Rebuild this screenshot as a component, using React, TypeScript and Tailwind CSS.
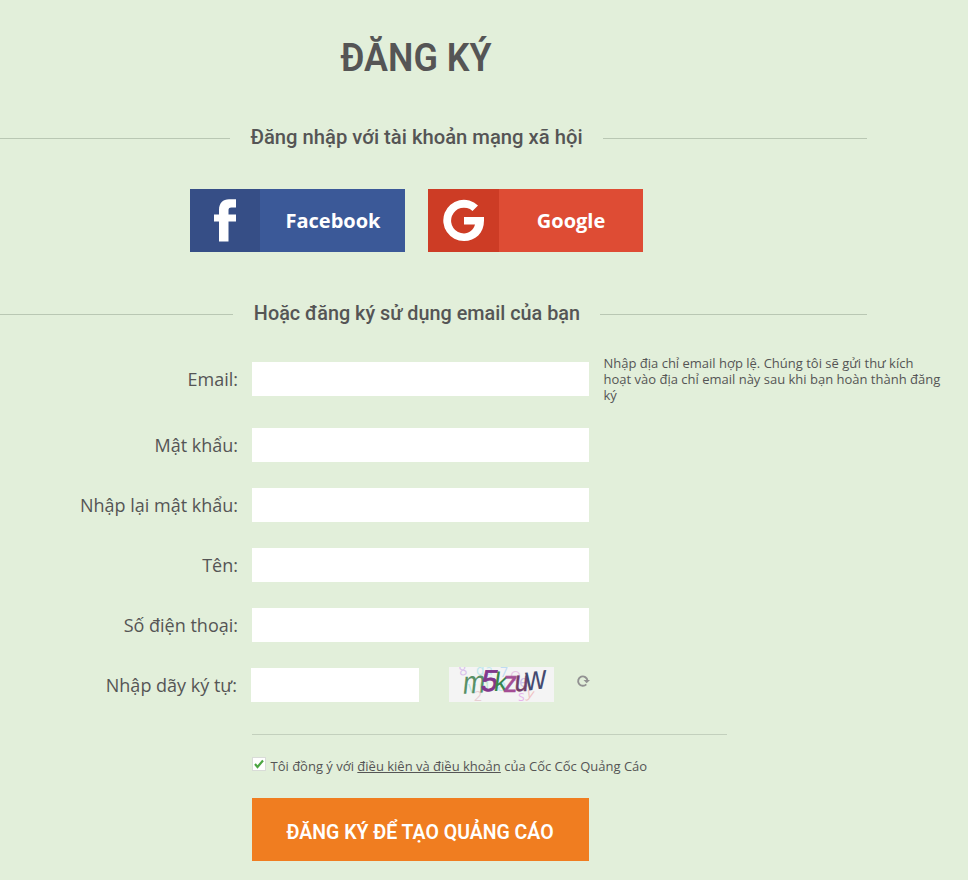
import React, { useState } from "react";

function Divider({ children, className }: { children: React.ReactNode; className: string }) {
  return (
    <div className="-ml-[34px] flex h-8 w-[901px] items-center gap-5">
      <span className="mt-px h-px flex-1 bg-[#b9c7b3]" />
      <h2 className={"-mt-0.5 flex justify-center whitespace-nowrap font-['Roboto',sans-serif] text-[21px] leading-8 font-medium " + className}>
        {children}
      </h2>
      <span className="mt-px h-px flex-1 bg-[#b9c7b3]" />
    </div>
  );
}

function Field({ label, type = "text", note }: { label: string; type?: string; note?: string }) {
  return (
    <div className="flex h-[34px] items-center">
      <label className="w-[238px] shrink-0 text-right">{label}</label>
      <input aria-label={label} type={type} className="ml-[14px] h-[34px] w-[337px] shrink-0 bg-white px-2 outline-none" />
      {note && <p className="ml-[14.5px] w-[340px] text-[13px] leading-4">{note}</p>}
    </div>
  );
}

function Captcha() {
  return (
    <svg width="105" height="35" viewBox="0 0 105 35" className="mb-0.5 ml-[30px] bg-[#f4f4f4] font-['Open_Sans',sans-serif]">
      <g fontSize="14" opacity=".6">
        <text x="11" y="9" fill="#c79be8" transform="rotate(-12 11 9)">8</text>
        <text x="27" y="8" fill="#9ce0e8">d</text>
        <text x="36" y="8" fill="#a8e3ef">a</text>
        <text x="51" y="10" fill="#9cccf2">7</text>
        <text x="61" y="14" fill="#e1a6dc">Q</text>
        <text x="19" y="26" fill="#8fe0e2" fontSize="16">v</text>
        <text x="25" y="34" fill="#dfb5bd">2</text>
        <text x="30" y="23" fill="#a8e3bd" fontSize="17">d</text>
        <text x="48" y="24" fill="#9fe5ef" fontSize="17">a</text>
        <text x="69" y="34" fill="#e08be8">s</text>
        <text x="77" y="30" fill="#efa2a5" transform="rotate(15 77 30)">y</text>
        <text x="70" y="20" fill="#b5a1e8" fontSize="17">e</text>
      </g>
      <g fontFamily="Liberation Sans">
        <text fontSize="32" fill="#589066" transform="translate(13 27) rotate(-4) skewX(-10) scale(.84 1)">m</text>
        <text fontSize="30" fill="#81378b" stroke="#81378b" strokeWidth=".8" transform="translate(31 24) skewX(-9)">5</text>
        <text fontSize="27" fill="#39864b" transform="translate(44 24) skewX(-8)">k</text>
        <text fontSize="30" fill="#a44e94" stroke="#a44e94" strokeWidth=".7" transform="translate(54 25) skewX(-5) scale(.9 1)">z</text>
        <text fontSize="29" fill="#713e68" stroke="#713e68" strokeWidth=".5" transform="translate(65 24) skewX(-6) scale(.85 1)">u</text>
        <text fontSize="34" fill="#444a70" transform="translate(76 24) rotate(-8) skewX(-8) scale(.87 1)">w</text>
      </g>
    </svg>
  );
}

export default function App() {
  const [agreed, setAgreed] = useState(true);
  return (
    <main className="h-[880px] w-[968px] overflow-hidden bg-[#e2efda] font-['Open_Sans',sans-serif] text-[18px] text-[#555]">
      <div className="-ml-[34px] flex w-[901px] justify-center pt-[34px]">
        <h1 className="flex w-[151px] justify-center whitespace-nowrap font-['Roboto',sans-serif] text-[39px] leading-[48px] font-semibold">
          <span className="scale-x-[.92]">ĐĂNG KÝ</span>
        </h1>
      </div>
      <div className="mt-10">
        <Divider className="w-[333px]"><span className="scale-x-[.963]">Đăng nhập với tài khoản mạng xã hội</span></Divider>
      </div>
      <div className="mt-[35px] ml-[190px] flex gap-[23px] text-[20px] font-bold text-white">
        <button className="flex h-[63px] w-[215px] bg-[#3b5998]">
          <span className="flex h-full w-[70px] bg-[#364e86]">
            <svg width="70" height="63" fill="#fff">
              <path d="M29 52.500V32.500H24V25.500H29V21C29 14 33 10.200 39 10.200H46V18.500H41.500C39 18.500 38.500 19.500 38.500 21.500V25.500H46V32.500H38.500V52.500Z" />
            </svg>
          </span>
          <span className="flex-1 self-center pl-px">Facebook</span>
        </button>
        <button className="flex h-[63px] w-[215px] bg-[#de4c34]">
          <span className="flex h-full w-[71px] bg-[#cd3c25]">
            <svg width="71" height="63" fill="#fff">
              <path d="M36 28V35.500H47C45.500 41 41 44.500 36 44.500A12.900 12.900 0 1 1 44.500 21.900L50 16.400A20.600 20.600 0 1 0 36 52C47.500 52 56 44 56 31.500V28Z" />
            </svg>
          </span>
          <span className="flex-1 self-center">Google</span>
        </button>
      </div>
      <div className="mt-[46px]">
        <Divider className="w-[327px]"><span className="scale-x-[.943]">Hoặc đăng ký sử dụng email của bạn</span></Divider>
      </div>
      <form className="mt-8" onSubmit={(e) => e.preventDefault()}>
        <Field label="Email:" note="Nhập địa chỉ email hợp lệ. Chúng tôi sẽ gửi thư kích hoạt vào địa chỉ email này sau khi bạn hoàn thành đăng ký" />
        <div className="mt-8 flex flex-col gap-[26px]">
          <Field label="Mật khẩu:" type="password" />
          <Field label="Nhập lại mật khẩu:" type="password" />
          <Field label="Tên:" />
          <Field label="Số điện thoại:" type="tel" />
          <div className="flex h-[34px] items-center">
            <label className="w-[237px] text-right">Nhập dãy ký tự:</label>
            <input aria-label="Nhập dãy ký tự" className="ml-[14px] h-[34px] w-[168px] bg-white px-2 outline-none" />
            <Captcha />
            <svg width="14" height="14" viewBox="0 0 14 14" className="mb-2 ml-[22px]" fill="none" stroke="#929292" strokeWidth="1.900">
              <path d="M10.300 10.300A4.700 4.700 0 1 1 11.500 6.500" />
              <path d="M7.500 6H14L10.700 9.300Z" fill="#929292" stroke="none" />
            </svg>
          </div>
        </div>
        <div className="mt-8 ml-[252px] w-[475px] border-t border-[#c3d0bd]" />
        <div className="mt-[21px] ml-[252px] flex h-5 text-[13px] leading-5 whitespace-nowrap">
          <button type="button" role="checkbox" aria-checked={agreed} aria-label="Tôi đồng ý" onClick={() => setAgreed(!agreed)} className="mt-px mr-[4.500px] h-[14px] w-[14px] border border-[#d9dcd8] bg-white">
            {agreed && <svg width="12" height="12" viewBox="0 0 12 12"><path d="M2 6 4.500 9 10 2.500" fill="none" stroke="#4ca642" strokeWidth="2.200" /></svg>}
          </button>
          <p>Tôi đồng ý với <a href="#terms" className="underline decoration-[#555] decoration-1 underline-offset-1 [text-decoration-skip-ink:none]">điều kiên và điều khoản</a> của Cốc Cốc Quảng Cáo</p>
        </div>
        <button className="mt-[22px] ml-[252px] flex h-[63px] w-[337px] items-center justify-center bg-[#f07d20] font-['Roboto',sans-serif] text-[21px] font-semibold whitespace-nowrap text-white">
          <span className="mt-1.5 scale-x-[.927]">ĐĂNG KÝ ĐỂ TẠO QUẢNG CÁO</span>
        </button>
      </form>
    </main>
  );
}
